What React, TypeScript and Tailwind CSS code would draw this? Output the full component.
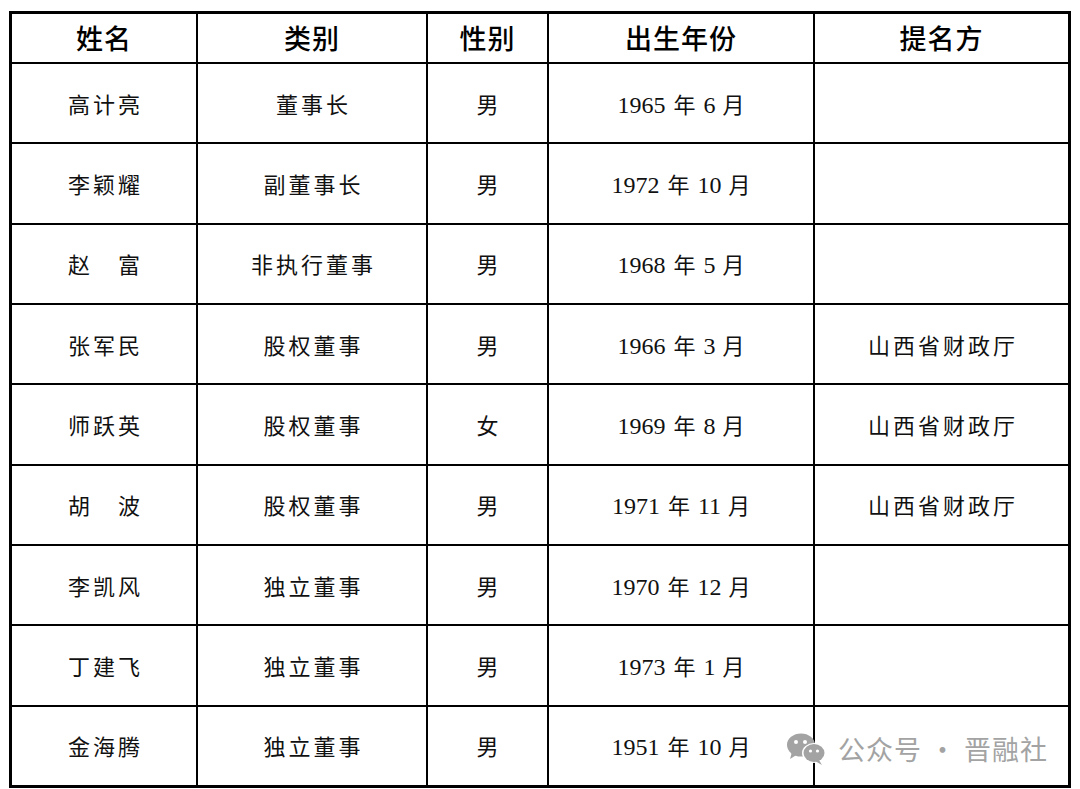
const rows = [
  ["高计亮", "董事长", "男", "1965", "6", ""],
  ["李颖耀", "副董事长", "男", "1972", "10", ""],
  ["赵\u3000富", "非执行董事", "男", "1968", "5", ""],
  ["张军民", "股权董事", "男", "1966", "3", "山西省财政厅"],
  ["师跃英", "股权董事", "女", "1969", "8", "山西省财政厅"],
  ["胡\u3000波", "股权董事", "男", "1971", "11", "山西省财政厅"],
  ["李凯风", "独立董事", "男", "1970", "12", ""],
  ["丁建飞", "独立董事", "男", "1973", "1", ""],
  ["金海腾", "独立董事", "男", "1951", "10", ""],
];

const headers = ["姓名", "类别", "性别", "出生年份", "提名方"];

const cjk = "font-['Noto_Sans_CJK_SC',sans-serif]";
const serif = "font-['Liberation_Serif','Noto_Sans_CJK_SC',serif]";

function WeChatIcon() {
  return (
    <svg width="42" height="34" viewBox="0 0 42 34" className="fill-[#a3a3a3]">
      <ellipse cx="15" cy="13" rx="14" ry="11.5" />
      <path d="M6 20 L4 27 L12 22 Z" />
      <ellipse cx="28" cy="21" rx="12" ry="10" className="fill-white" />
      <ellipse cx="28" cy="21" rx="10.5" ry="9" />
      <path d="M33 28 L36 33 L29 29 Z" />
      <circle cx="10" cy="10" r="2" className="fill-white" />
      <circle cx="19" cy="10" r="2" className="fill-white" />
      <circle cx="24.5" cy="19" r="1.6" className="fill-white" />
      <circle cx="31.5" cy="19" r="1.6" className="fill-white" />
    </svg>
  );
}

const cell = "bg-white flex items-center justify-center text-[22px] text-[#111]";

export default function App() {
  return (
    <div className="w-[1080px] h-[789px] bg-white relative overflow-hidden">
      <div className="absolute left-[9px] top-[11px] border-[3px] border-black bg-black">
        <div className="grid grid-cols-[184px_228px_119px_264px_253px] grid-rows-[48px_repeat(9,1fr)] h-[771px] gap-[2px] bg-black">
          {headers.map((h) => (
            <div
              key={h}
              className={`bg-white flex items-center justify-center text-[27px] font-medium text-black tracking-[1px] ${cjk}`}
            >
              {h}
            </div>
          ))}
          {rows.map((r, i) => (
            <>
              <div key={`a${i}`} className={`${cell} tracking-[3px] pl-[3px] ${cjk}`}>
                {r[0]}
              </div>
              <div key={`b${i}`} className={`${cell} tracking-[3px] pl-[3px] ${cjk}`}>
                {r[1]}
              </div>
              <div key={`c${i}`} className={`${cell} ${cjk}`}>
                {r[2]}
              </div>
              <div key={`d${i}`} className={`${cell} pt-[2px]`}>
                <span className={`text-[24px] leading-none ${serif}`}>
                  {r[3]}
                  <span className={`text-[22px] mx-[8px] ${cjk}`}>年</span>
                  {r[4]}
                  <span className={`text-[22px] ml-[7px] ${cjk}`}>月</span>
                </span>
              </div>
              <div key={`e${i}`} className={`${cell} tracking-[3px] pl-[3px] ${cjk}`}>
                {r[5]}
              </div>
            </>
          ))}
        </div>
      </div>
      <div className="absolute left-[786px] top-[729px] flex items-center gap-[10px]">
        <WeChatIcon />
        <span className={`text-[27px] text-[#a3a3a3] tracking-[1px] ${cjk}`}>公众号 · 晋融社</span>
      </div>
    </div>
  );
}
